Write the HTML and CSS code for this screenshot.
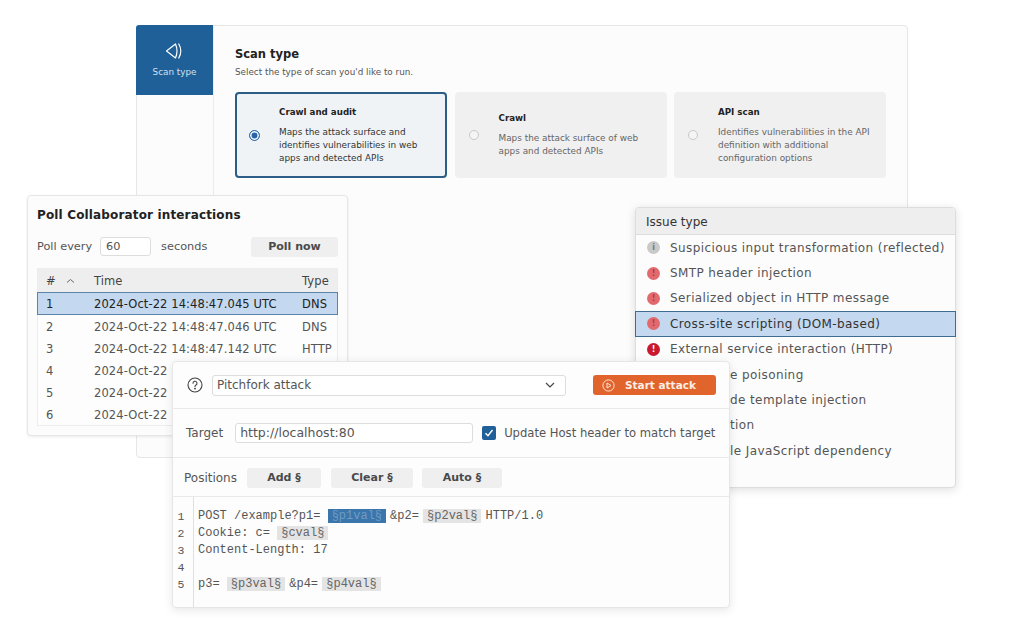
FILE: index.html
```html
<!DOCTYPE html>
<html lang="en">
<head>
<meta charset="utf-8">
<title>Scan type</title>
<link rel="stylesheet" href="styles.css">
</head>
<body>
<main class="canvas">
  <section class="window scan">
    <nav class="side">
      <div class="side-tab">
        <svg class="tab-icon" width="20" height="20" viewBox="0 0 20 20" fill="none" stroke="#fff" stroke-width="1.2" stroke-linejoin="round" stroke-linecap="round"><path d="M1.500 10 10.500 3Q13.500 10 10.500 17z"/><path d="M13.800 3Q17.800 10 13.800 17"/></svg>
        <span>Scan type</span>
      </div>
    </nav>
    <div class="scan-body">
      <h1>Scan type</h1>
      <p class="sub">Select the type of scan you'd like to run.</p>
      <div class="cards">
        <div class="card selected">
          <span class="radio on"></span>
          <div><h2>Crawl and audit</h2><p>Maps the attack surface and identifies vulnerabilities in web apps and detected APIs</p></div>
        </div>
        <div class="card">
          <span class="radio"></span>
          <div><h2>Crawl</h2><p>Maps the attack surface of web apps and detected APIs</p></div>
        </div>
        <div class="card">
          <span class="radio"></span>
          <div><h2>API scan</h2><p>Identifies vulnerabilities in the API definition with additional configuration options</p></div>
        </div>
      </div>
    </div>
  </section>

  <section class="window poll">
    <h2 class="poll-title">Poll Collaborator interactions</h2>
    <div class="poll-row">
      <span>Poll every</span><span class="poll-input">60</span><span class="poll-sec">seconds</span>
      <span class="btn poll-btn">Poll now</span>
    </div>
    <div class="table">
      <div class="tr th"><span class="c-n">#<svg class="sort" width="9" height="6" viewBox="0 0 9 6" fill="none" stroke="#666" stroke-width="1"><path d="M1 4.500 4.500 1.500 8 4.500"/></svg></span><span class="c-t">Time</span><span>Type</span></div>
      <div class="tr active"><span class="c-n">1</span><span class="c-t">2024-Oct-22 14:48:47.045 UTC</span><span>DNS</span></div>
      <div class="tr"><span class="c-n">2</span><span class="c-t">2024-Oct-22 14:48:47.046 UTC</span><span>DNS</span></div>
      <div class="tr"><span class="c-n">3</span><span class="c-t">2024-Oct-22 14:48:47.142 UTC</span><span>HTTP</span></div>
      <div class="tr"><span class="c-n">4</span><span class="c-t">2024-Oct-22</span></div>
      <div class="tr"><span class="c-n">5</span><span class="c-t">2024-Oct-22</span></div>
      <div class="tr"><span class="c-n">6</span><span class="c-t">2024-Oct-22</span></div>
    </div>
  </section>

  <section class="window issues">
    <div class="issue-head">Issue type</div>
    <ul class="issue-list">
      <li><i class="dot info">i</i>Suspicious input transformation (reflected)</li>
      <li><i class="dot med">!</i>SMTP header injection</li>
      <li><i class="dot med">!</i>Serialized object in HTTP message</li>
      <li class="active"><i class="dot med">!</i>Cross-site scripting (DOM-based)</li>
      <li><i class="dot high">!</i>External service interaction (HTTP)</li>
      <li class="hidden-part"><span class="tail">e poisoning</span></li>
      <li class="hidden-part"><span class="tail">de template injection</span></li>
      <li class="hidden-part"><span class="tail">tion</span></li>
      <li class="hidden-part"><span class="tail">le JavaScript dependency</span></li>
    </ul>
  </section>

  <section class="window attack">
    <div class="a-row a-top">
      <svg width="16" height="16" viewBox="0 0 16 16" fill="none" stroke="#444" stroke-width="1.100"><circle cx="8" cy="8" r="7"/><path d="M6 6.300a2 2 0 1 1 3 1.700c-.7.400-1 .8-1 1.600" stroke-linecap="round"/><circle cx="8" cy="11.600" r=".4" fill="#444"/></svg>
      <div class="select">Pitchfork attack<svg width="10" height="6" viewBox="0 0 10 6" fill="none" stroke="#444" stroke-width="1.200"><path d="M1 1 5 5 9 1"/></svg></div>
      <div class="start"><svg width="13" height="13" viewBox="0 0 13 13" fill="none" stroke="#fbe6da" stroke-width="1"><circle cx="6.500" cy="6.500" r="5.600"/><path d="M5 4v5l4-2.500z"/></svg><span>Start attack</span></div>
    </div>
    <div class="a-row a-target">
      <span class="t-label">Target</span>
      <div class="target-input">http://localhost:80</div>
      <span class="check"><svg width="10" height="10" viewBox="0 0 10 10" fill="none" stroke="#fff" stroke-width="1.400"><path d="M1.500 5.200 4 7.800 8.500 2"/></svg></span>
      <span class="host">Update Host header to match target</span>
    </div>
    <div class="a-row a-pos">
      <span class="pos-label">Positions</span>
      <span class="btn add">Add §</span><span class="btn clear">Clear §</span><span class="btn auto">Auto §</span>
    </div>
    <div class="editor">
      <div class="gutter">1<br>2<br>3<br>4<br>5</div>
      <pre class="code">POST /example?p1= <mark class="hot">§p1val§</mark>&amp;p2= <mark class="tight">§p2val§</mark>HTTP/1.0
Cookie: c= <mark>§cval§</mark>
Content-Length: 17

p3= <mark>§p3val§</mark>&amp;p4= <mark class="tight">§p4val§</mark></pre>
    </div>
  </section>
</main>
</body>
</html>
```
FILE: styles.css
```css
* { box-sizing: border-box; }
html, body { margin: 0; padding: 0; background: #fff; }
body { font-family: "DejaVu Sans", "Liberation Sans", sans-serif; color: #444; overflow: hidden; }
.canvas { position: relative; width: 1020px; height: 634px; overflow: hidden; }
.window { position: absolute; background: #fcfcfc; border: 1px solid #e6e6e6; border-radius: 4px; }
h1, h2, p, ul { margin: 0; padding: 0; }

/* Scan window */
.scan { left: 136px; top: 25px; width: 772px; height: 433px; display: flex; }
.side { width: 77px; border-right: 1px solid #ebebeb; flex: none; }
.side-tab { height: 70px; margin: -1px 0 0 -1px; background: #1f6099; color: #cfe0ee; font-size: 8.800px; display: flex; flex-direction: column; align-items: center; padding-top: 16px; gap: 6px; border-top-left-radius: 3px; }
.tab-icon { display: block; }
.scan-body { flex: 1; padding: 20px 21px 0; }
h1 { font-size: 11.500px; line-height: 16px; font-weight: 700; color: #222; }
.sub { font-size: 8.800px; line-height: 12px; margin-top: 4px; color: #555; }
.cards { display: flex; gap: 7.500px; margin-top: 14px; }
.card { width: 212px; height: 86px; flex: none; background: #f0f0f0; border-radius: 4px; display: flex; align-items: center; padding: 0 14px; gap: 20px; color: #666; }
.card.selected { background: #eff3f6; border: 2px solid #2b5d86; padding-left: 12px; gap: 19px; color: #333; }
.card h2 { font-size: 8.700px; line-height: 12px; font-weight: 700; color: #222; margin-bottom: 8px; }
.card p { font-size: 8.900px; line-height: 13px; }
.radio { width: 10px; height: 10px; border-radius: 50%; border: 1px solid #c8c8c8; background: #f5f5f5; flex: none; }
.radio.on { width: 11px; height: 11px; border-color: #2f6cb0; background: #2a64a8; box-shadow: inset 0 0 0 1.500px #fff; }

/* Poll window */
.poll { left: 27px; top: 195px; width: 321px; height: 241px; padding: 12px 9px 0; box-shadow: 0 1px 3px rgba(0,0,0,.08); }
.poll-title { font-size: 12px; line-height: 15px; font-weight: 700; color: #222; letter-spacing: .15px; }
.poll-row { display: flex; align-items: center; font-size: 11.300px; margin-top: 13px; height: 21px; color: #555; }
.poll-input { width: 51px; height: 19px; border: 1px solid #ddd; border-radius: 3px; background: #fff; margin-left: 8px; padding-left: 5px; line-height: 17px; }
.poll-sec { margin-left: 10px; }
.btn { background: #efefef; border-radius: 3px; font-weight: 700; color: #4a4a4a; text-align: center; font-size: 11px; }
.poll-btn { margin-left: auto; width: 87px; height: 20px; line-height: 20px; }
.table { margin-top: 11px; border: 1px solid #ececec; border-top: 0; height: 158px; background: #fdfdfd; font-size: 11.500px; letter-spacing: .1px; color: #555; }
.tr { display: flex; align-items: center; height: 22px; padding: 1px 0 0 8px; white-space: nowrap; }
.th { height: 24px; background: #eee; color: #444; }
.c-n { width: 48px; display: flex; align-items: center; gap: 10px; flex: none; }
.c-t { width: 208px; flex: none; }
.tr.active { background: #c4d8ef; border: 1px solid #5c83a8; margin: 0 -1px; padding-top: 0; color: #222; height: 23px; }

/* Issues */
.issues { left: 635px; top: 207px; width: 321px; height: 281px; border-color: #ddd; box-shadow: 0 2px 10px rgba(0,0,0,.13); }
.issue-head { height: 27px; line-height: 27px; padding: 1px 0 0 10px; background: #eee; border-bottom: 1px solid #ddd; font-size: 12px; color: #333; border-radius: 3px 3px 0 0; }
.issue-list { list-style: none; font-size: 12px; color: #555; }
.issue-list li { height: 25.400px; display: flex; align-items: center; padding-left: 11px; gap: 10px; white-space: nowrap; letter-spacing: .4px; }
.issue-list li.active { background: #c4d8ef; outline: 1px solid #3f6d92; outline-offset: -1px; color: #333; margin: 0 -1px; padding-left: 12px; }
.issue-list li.hidden-part { padding-left: 0; }
.tail { margin-left: 94px; }
.dot { width: 13px; height: 13px; border-radius: 50%; color: #fff; font-size: 8px; font-weight: 700; font-style: normal; text-align: center; line-height: 13px; flex: none; letter-spacing: 0; }
.dot.info { background: #c9c9c9; color: #777; }
.dot.med { background: #e26a6f; color: #b03a3f; }
.dot.high { background: #c8192e; }

/* Attack */
.attack { left: 172px; top: 361px; width: 558px; height: 247px; background: #fdfdfd; box-shadow: 0 2px 10px rgba(0,0,0,.1); font-size: 11.600px; color: #555; }
.a-row { display: flex; align-items: center; border-bottom: 1px solid #eaeaea; }
.a-top { height: 47px; padding-left: 14px; }
.select { margin-left: 9px; width: 354px; height: 21px; border: 1px solid #ddd; border-radius: 3px; background: #fff; padding: 0 10px 0 4px; display: flex; align-items: center; justify-content: space-between; font-size: 12px; }
.start { margin-left: 27px; width: 123px; height: 20px; background: #e0642c; border-radius: 3px; color: #fbeee6; font-weight: 700; display: flex; align-items: center; padding-left: 9px; gap: 10px; font-size: 10.500px; }
.a-target { height: 49px; padding-left: 13px; }
.t-label { font-size: 12px; }
.target-input { margin-left: 12px; width: 238px; height: 20px; border: 1px solid #ddd; border-radius: 3px; background: #fff; padding-left: 4px; line-height: 18px; font-size: 12.500px; }
.check { width: 14px; height: 14px; border-radius: 2px; background: #1f6099; margin: 0 8px 0 9px; display: flex; align-items: center; justify-content: center; }
.a-pos { height: 39px; padding: 1px 0 0 11px; }
.pos-label { width: 63px; font-size: 12px; }
.btn.add { width: 74px; height: 20px; line-height: 20px; }
.btn.clear { width: 82px; height: 20px; line-height: 20px; margin-left: 10px; }
.btn.auto { width: 80px; height: 20px; line-height: 20px; margin-left: 9px; }
.editor { display: flex; height: 110px; font-family: "Liberation Mono", monospace; font-size: 12px; line-height: 17px; color: #555; }
.gutter { width: 21px; flex: none; padding: 11px 4px 0 0; text-align: center; border-right: 1px solid #e0e0e0; font-size: 11.500px; }
.code { margin: 0 0 0 4px; padding-top: 11px; font: inherit; white-space: pre; }
mark { display: inline-block; line-height: 14px; background: #e4e4e4; color: #666; padding: 0 4px; margin-right: 4px; }
mark.tight { margin-left: -3px; }
mark.hot { background: #3a75ab; color: #6f9cc4; }
```
